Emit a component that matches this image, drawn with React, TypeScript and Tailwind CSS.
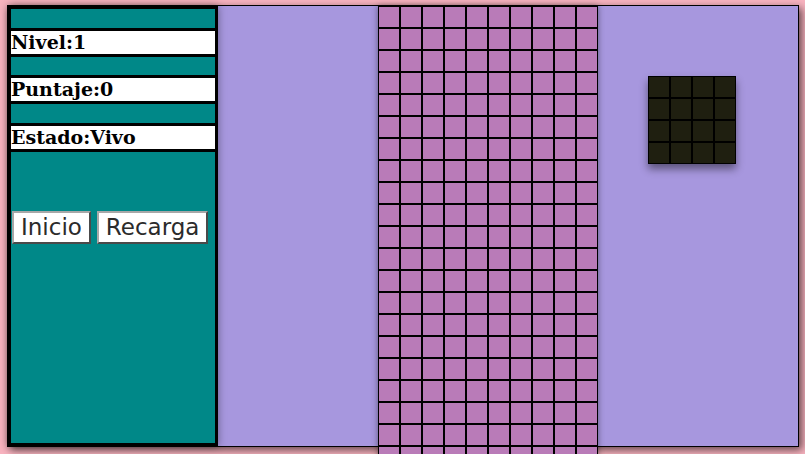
import React from 'react';

const ROWS = 21;
const COLS = 10;

function Label({ text, top }: { text: string; top: string }) {
  return (
    <div
      className={`${top} h-[29px] border-y-[3px] border-black bg-white text-[19px] leading-[23px] font-bold text-black [font-family:'DejaVu_Serif',serif]`}
    >
      {text}
    </div>
  );
}

function GameButton({ children }: { children: React.ReactNode }) {
  return (
    <button className="h-[33px] px-[7px] bg-white border-2 border-t-[#a8a8a8] border-l-[#a8a8a8] border-r-[#4a4a4a] border-b-[#4a4a4a] text-[23px] leading-[27px] text-[#2b2b2b] [font-family:'DejaVu_Sans',sans-serif]">
      {children}
    </button>
  );
}

export default function App() {
  const board = Array.from({ length: ROWS * COLS });
  const piece = Array.from({ length: 16 });

  return (
    <div className="h-[454px] w-full overflow-hidden bg-[#f8b3bf] pt-[5px] pl-[7px]">
      {/* Game container */}
      <div className="flex w-[792px] h-[442px] border border-black bg-[#a797de] shadow-[3px_3px_8px_rgba(0,0,0,0.6)]">
        {/* Side panel */}
        <div className="w-[210px] h-full flex flex-col border-[3px] border-black bg-[#008888] shadow-[0_0_8px_rgba(0,0,0,0.4)]">
          <Label text="Nivel:1" top="mt-[19px]" />
          <Label text="Puntaje:0" top="mt-[18px]" />
          <Label text="Estado:Vivo" top="mt-[19px]" />
          <div className="flex gap-[6px] ml-px mt-[59px]">
            <GameButton>Inicio</GameButton>
            <GameButton>Recarga</GameButton>
          </div>
        </div>

        {/* Play area */}
        <div className="relative flex-1">
          <div className="ml-[160px] w-[220px] grid grid-cols-10 shadow-[0_0_6px_rgba(0,0,0,0.45)]">
            {board.map((_, i) => (
              <div key={i} className="w-[22px] h-[22px] border border-black bg-[#b97bb8]" />
            ))}
          </div>

          {/* Next piece */}
          <div className="absolute left-[430px] top-[70px] w-[88px] grid grid-cols-4 shadow-[0_5px_8px_rgba(0,0,0,0.45)]">
            {piece.map((_, i) => (
              <div key={i} className="w-[22px] h-[22px] border border-black bg-[#1f1f10]" />
            ))}
          </div>
        </div>
      </div>
    </div>
  );
}
